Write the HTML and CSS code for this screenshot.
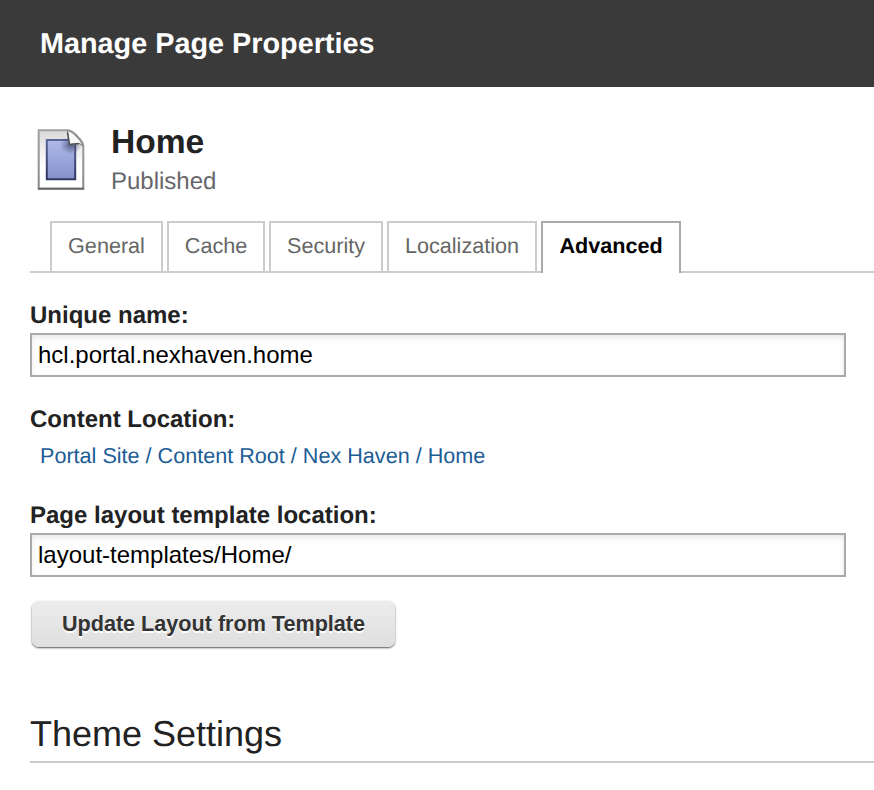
FILE: index.html
```html
<!DOCTYPE html>
<html lang="en">
<head>
<meta charset="utf-8">
<title>Manage Page Properties</title>
<link rel="stylesheet" href="styles.css">
</head>
<body>
<header class="bar"><h1><span>Manage Page Properties</span></h1></header>
<main>
<section class="page-info">
<svg class="doc" width="48" height="62" viewBox="0 0 48 62">
<defs>
<linearGradient id="paper" x1="0" y1="0" x2="0" y2="1"><stop offset="0" stop-color="#d9d9d9"/><stop offset=".6" stop-color="#fff"/><stop offset="1" stop-color="#fff"/></linearGradient>
<linearGradient id="edge" x1="0" y1="0" x2="0" y2="1"><stop offset="0" stop-color="#a0a0a0"/><stop offset="1" stop-color="#888"/></linearGradient>
<linearGradient id="ink" x1="0" y1="0" x2="0" y2="1"><stop offset="0" stop-color="#b0bae8"/><stop offset="1" stop-color="#8491cb"/></linearGradient>
<linearGradient id="ink-edge" x1="0" y1="0" x2="0" y2="1"><stop offset="0" stop-color="#596497"/><stop offset="1" stop-color="#303660"/></linearGradient>
<radialGradient id="shade"><stop offset="0" stop-color="#333a60" stop-opacity=".7"/><stop offset="1" stop-color="#333a60" stop-opacity="0"/></radialGradient>
</defs>
<path d="M1.700 1.200H31.500C35 1.400 37 4 40 7C43 10 46.300 13 46.300 17V59.800H1.700Z" fill="url(#paper)" stroke="url(#edge)" stroke-width="2"/>
<path d="M1 59.700H47" stroke="#666" stroke-width="1.800"/>
<path d="M9.800 11H38.200V50.200H9.800Z" fill="url(#ink)" stroke="url(#ink-edge)" stroke-width="2"/>
<ellipse cx="34" cy="16" rx="11" ry="9" fill="url(#shade)"/>
<path d="M30.500 2.500L32.500 15.500L42.500 14.500L46 17C45 12 36 2.500 30.500 1.500Z" fill="#f7f7f7" stroke="#888" stroke-width="1.200"/>
<path d="M30.500 3.500L32.500 15.500L42 14.500" fill="none" stroke="#505050" stroke-width="1.500"/>
</svg>
<div><h2><span>Home</span></h2><p class="status"><span>Published</span></p></div>
</section>
<nav class="tabs">
<a class="tab general"><span>General</span></a><a class="tab cache"><span>Cache</span></a><a class="tab security"><span>Security</span></a><a class="tab localization"><span>Localization</span></a><a class="tab active"><span>Advanced</span></a>
</nav>
<form>
<label for="name">Unique name:</label>
<input id="name" type="text" value="hcl.portal.nexhaven.home">
<p class="label content-label">Content Location:</p>
<a class="location">Portal Site / Content Root / Nex Haven / Home</a>
<label for="layout">Page layout template location:</label>
<input id="layout" type="text" value="layout-templates/Home/">
<button type="button">Update Layout from Template</button>
</form>
<h2 class="theme">Theme Settings</h2>
</main>
</body>
</html>
```

FILE: styles.css
```css
* { box-sizing: border-box; }
body { margin: 0; width: 874px; height: 790px; overflow: hidden; background: #fff; color: #222; font-family: "Liberation Sans", Arial, sans-serif; text-rendering: geometricPrecision; }
h1, h2, p { margin: 0; }
.bar { height: 87px; background: #3a3a3a; color: #fff; padding: 27px 40px 26px; }
.bar h1 { font-size: 28.8px; line-height: 34px; }
main { padding-left: 30px; }
.page-info { height: 134px; display: flex; padding: 42px 0 0 7px; }
.doc { margin-right: 26px; }
.page-info h2 { font-size: 33.6px; line-height: 38px; margin-top: -5px; }
.status { color: #67676b; font-size: 24px; line-height: 28px; margin-top: 6px; }
.tabs { height: 52px; padding-left: 20px; display: flex; gap: 4px; border-bottom: 2px solid #ccc; }
.tab { height: 50px; border: 2px solid #ccc; border-bottom: 0; color: #666; font-size: 21.6px; line-height: 46px; text-align: center; white-space: nowrap; }
.general { width: 113px; }
.cache { width: 98px; }
.security { width: 114px; }
.localization { width: 150px; }
.active { width: 140px; height: 52px; border-color: #aaa; background: #fff; color: #000; font-weight: bold; }
form { display: flex; flex-direction: column; align-items: flex-start; padding-top: 28px; }
label, .label { font-size: 24px; font-weight: bold; line-height: 30px; }
input { width: 816px; height: 44px; margin: 2px 0 28px; padding: 0 6px; border: 2px solid #aaa; background: #fff; box-shadow: inset 0 3px 7px -1px #e4e4e4; color: #000; font: 24px "Liberation Sans", Arial, sans-serif; }
.location { font-size: 21.6px; line-height: 28px; color: #205c96; margin: 7px 0 31px 10px; }
button { width: 363px; height: 46px; margin: -4px 0 0 2px; padding: 0; border: 0; border-radius: 7px; background: linear-gradient(#ececec, #dfdfdf); box-shadow: 0 1px 2px #555; color: #333; font: bold 21.6px "Liberation Sans", Arial, sans-serif; text-shadow: 0 2px 0 #fff; }
.theme { font-size: 36px; font-weight: normal; line-height: 44px; height: 51px; margin-top: 65px; border-bottom: 2px solid #ccc; }
```
